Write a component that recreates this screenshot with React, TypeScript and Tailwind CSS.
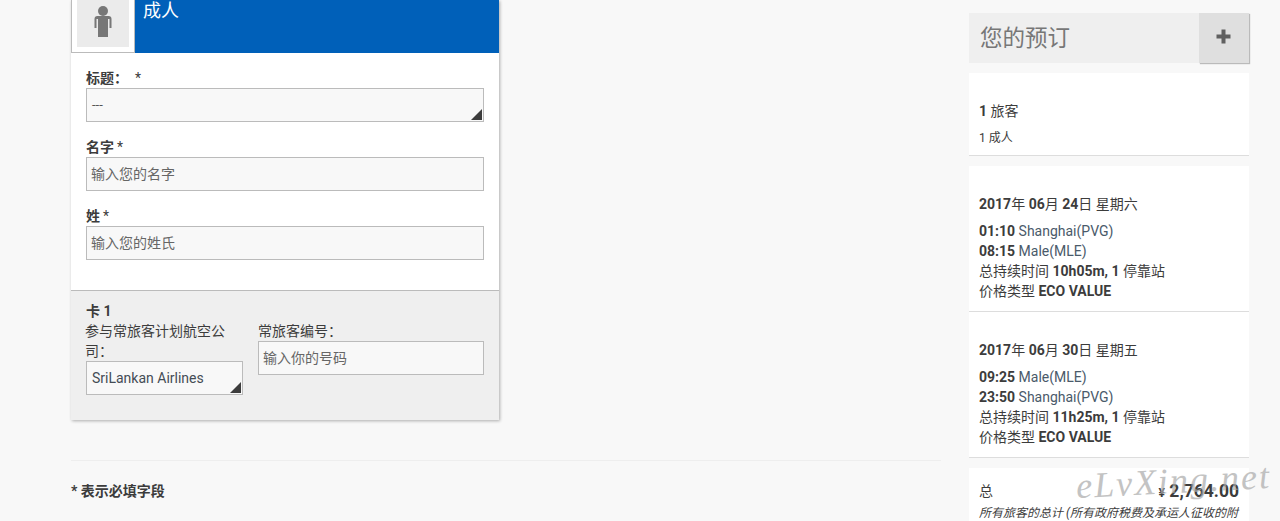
import React from "react";

const font = { fontFamily: 'Roboto, "Noto Sans CJK SC", sans-serif' };

function Caret() {
  return (
    <svg className="absolute right-px bottom-px" width="11" height="11" viewBox="0 0 11 11">
      <path d="M11 0V11H0Z" fill="#3c3c3c" />
    </svg>
  );
}

function Field({ label, star, placeholder }: { label: string; star: string; placeholder: string }) {
  return (
    <div className="mb-[15px]">
      <div className="h-[20px] leading-[20px] text-[14px] text-[#3c3c3c] font-bold">
        {label}
        <span className="font-normal ml-[3px]">{star}</span>
      </div>
      <div className="h-[34px] border border-[#bbbbbb] bg-[#f8f8f8] pl-[4px] text-[14px] leading-[32px] text-[#666666]">
        {placeholder}
      </div>
    </div>
  );
}

function Flight({ date, rows, dur }: { date: React.ReactNode; rows: [string, string][]; dur: string }) {
  return (
    <div className="bg-white border-b border-[#dddddd] h-[146px] px-[10px] pt-[28px] text-[14px] text-[#3c3c3c]">
      <div className="h-[20px] leading-[20px]">{date}</div>
      <div className="mt-[7px] leading-[20px]">
        {rows.map(([t, p]) => (
          <div key={t} className="h-[20px]">
            <b>{t}</b> <span className="text-[#4a5a6a]">{p}</span>
          </div>
        ))}
        <div className="h-[20px]">
          总持续时间 <b>{dur}, 1</b> 停靠站
        </div>
        <div className="h-[20px]">
          价格类型 <b>ECO VALUE</b>
        </div>
      </div>
    </div>
  );
}

export default function App() {
  return (
    <div style={font} className="relative w-[1280px] h-[521px] overflow-hidden bg-[#f8f8f8] flex pl-[71px]">
      <main className="w-[870px] shrink-0">
        <section className="w-[428px] bg-white shadow-[1px_1px_3px_rgba(0,0,0,0.3)]">
          <header className="h-[53px] flex">
            <div className="w-[64px] h-[53px] border-l border-b border-r border-[#bbbbbb] bg-white px-[5px] shrink-0">
              <div className="w-[52px] h-[47px] bg-[#ebebeb] flex justify-center pt-[5px]">
                <svg width="18" height="33" viewBox="0 0 18 33">
                  <circle cx="9" cy="6" r="5" fill="#777777" />
                  <path d="M0.5 23V14Q0.5 11 3.5 11H14.5Q17.5 11 17.5 14V23H15.5V14H14V32H4V14H2.5V23Z" fill="#777777" />
                </svg>
              </div>
            </div>
            <div className="flex-1 bg-[#0060b9] text-white text-[18px] leading-[18px] pl-[8px] pt-[2px]">成人</div>
          </header>
          <div className="px-[15px] pt-[15px] h-[237px]">
            <div className="mb-[15px]">
              <div className="h-[20px] leading-[20px] text-[14px] text-[#3c3c3c] font-bold">
                标题： <span className="font-normal">&nbsp;*</span>
              </div>
              <div className="relative h-[34px] border border-[#bbbbbb] bg-[#f8f8f8] pl-[5px] text-[13px] leading-[32px] text-[#555555]">
                ---
                <Caret />
              </div>
            </div>
            <Field label="名字" star="*" placeholder="输入您的名字" />
            <Field label="姓" star="*" placeholder="输入您的姓氏" />
          </div>
          <div className="h-[130px] border-t border-[#bbbbbb] bg-[#efefef] px-[15px] pt-[10px] text-[14px] text-[#3c3c3c]">
            <div className="h-[20px] leading-[20px] font-bold">卡 1</div>
            <div className="flex gap-[15px]">
              <div className="w-[157px] shrink-0">
                <div className="leading-[20px] h-[40px] w-[145px] -ml-px">参与常旅客计划航空公司：</div>
                <div className="relative h-[34px] border border-[#bbbbbb] bg-[#f8f8f8] pl-[5px] leading-[32px] text-[#444c55]">
                  SriLankan Airlines
                  <Caret />
                </div>
              </div>
              <div className="flex-1">
                <div className="leading-[20px] h-[20px]">常旅客编号：</div>
                <div className="h-[34px] border border-[#bbbbbb] bg-[#f8f8f8] pl-[4px] leading-[32px] text-[#666666]">
                  输入你的号码
                </div>
              </div>
            </div>
          </div>
        </section>
        <div className="mt-[40px] border-t border-[#eeeeee] pt-[20px] h-[60px] text-[14px] leading-[20px] font-bold text-[#3c3c3c]">
          * 表示必填字段
        </div>
      </main>
      <aside className="ml-[28px] w-[280px] shrink-0 pt-[13px] text-[#3c3c3c]">
        <div className="flex h-[50px] bg-[#efefef]">
          <div className="flex-1 pl-[11px] text-[22.5px] leading-[51px] text-[#777777]">您的预订</div>
          <div className="w-[50px] bg-[#dfdfdf] shadow-[1px_1px_1px_rgba(0,0,0,0.25)] flex items-center justify-center pb-[4px] pr-[1px]">
            <svg width="15" height="15" viewBox="0 0 15 15">
              <path d="M5.5 0.5H9.5V5.5H14.5V9.5H9.5V14.5H5.5V9.5H0.5V5.5H5.5Z" fill="#606060" />
            </svg>
          </div>
        </div>
        <div className="mt-[10px] h-[83px] bg-white border-b border-[#dddddd] px-[10px] pt-[28px]">
          <div className="h-[20px] leading-[20px] text-[14px]">
            <b>1</b> 旅客
          </div>
          <div className="mt-[7px] h-[20px] leading-[20px] text-[12px]">1 成人</div>
        </div>
        <div className="mt-[10px]">
          <Flight
            date={<><b>2017</b>年 <b>06</b>月 <b>24</b>日 星期六</>}
            rows={[["01:10", "Shanghai(PVG)"], ["08:15", "Male(MLE)"]]}
            dur="10h05m"
          />
          <Flight
            date={<><b>2017</b>年 <b>06</b>月 <b>30</b>日 星期五</>}
            rows={[["09:25", "Male(MLE)"], ["23:50", "Shanghai(PVG)"]]}
            dur="11h25m"
          />
        </div>
        <div className="mt-[10px] h-[60px] bg-white px-[10px] pt-[13px] overflow-hidden">
          <div className="flex justify-between h-[20px] leading-[20px] text-[14px]">
            <span>总</span>
            <b className="text-[17.5px]"><span className="text-[12px]">¥</span> 2,764.00</b>
          </div>
          <div className="mt-[2px] text-[12px] leading-[20px] italic whitespace-nowrap">所有旅客的总计 (所有政府税费及承运人征收的附</div>
        </div>
      </aside>
      <div
        className="absolute left-[1076px] top-[459px] text-[36px] leading-[44px] italic text-[#aaaaaa] opacity-70 whitespace-nowrap tracking-[2px] -rotate-[3deg]"
        style={{ fontFamily: '"Liberation Serif", serif' }}
      >
        eLvXing.net
      </div>
    </div>
  );
}
